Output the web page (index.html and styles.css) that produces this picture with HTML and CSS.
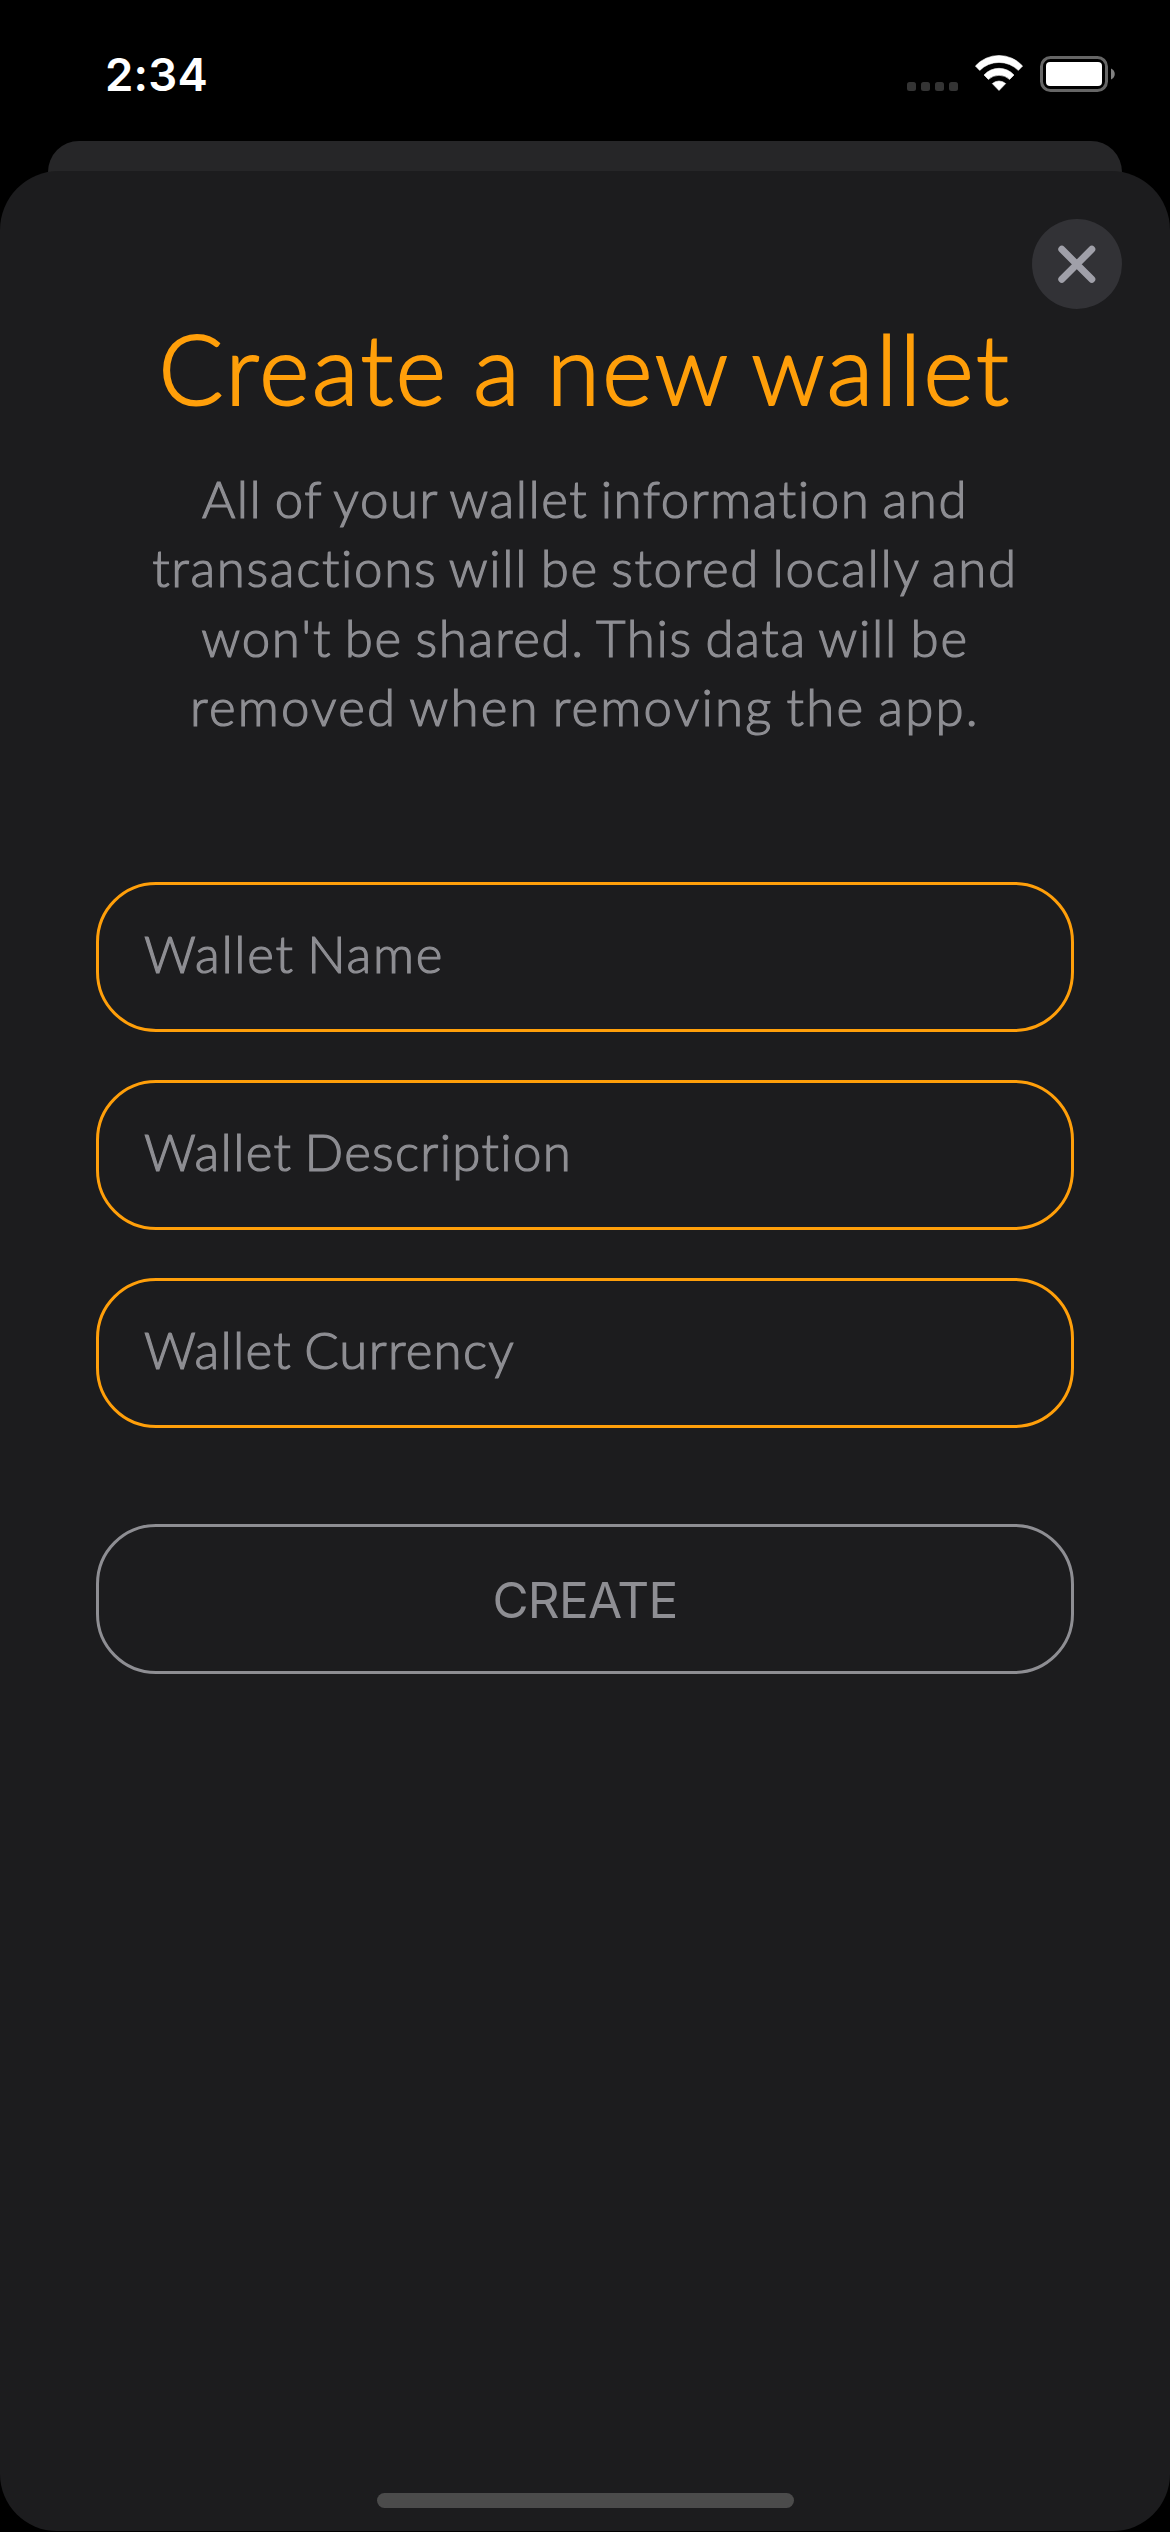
FILE: index.html
```html
<!DOCTYPE html>
<html lang="en">
<head>
<meta charset="utf-8">
<title>Create a new wallet</title>
<link rel="stylesheet" href="styles.css">
</head>
<body>
<div class="screen">
  <header class="status">
    <span class="time">2:34</span>
    <div class="indicators">
      <svg class="cellular" width="51" height="37" viewBox="0 0 51 37" fill="#343434">
        <rect x="0" y="27" width="9" height="9" rx="2.5"/>
        <rect x="14" y="27" width="9" height="9" rx="2.5"/>
        <rect x="28" y="27" width="9" height="9" rx="2.5"/>
        <rect x="42" y="27" width="9" height="9" rx="2.5"/>
      </svg>
      <svg class="wifi" width="48" height="37" viewBox="0 0 48 37" fill="#fff" stroke="#fff" stroke-width="0.6" stroke-linejoin="round">
        <path d="M.4 11A31.7 31.7 0 0 1 47.6 11L43.3 15.4A27.3 27.3 0 0 0 4.7 15.4Z"/>
        <path d="M9 20A20.2 20.2 0 0 1 39 20L34.6 24.4A15.7 15.7 0 0 0 13.4 24.4Z"/>
        <path d="M17.3 28.6A10 10 0 0 1 30.7 28.6L24 35.5Z"/>
      </svg>
      <svg class="battery" width="76" height="37" viewBox="0 0 76 37">
        <rect x="1.5" y="2.5" width="65" height="33" rx="9" fill="none" stroke="#666" stroke-width="3"/>
        <rect x="6" y="7" width="56" height="24" rx="4" fill="#fff"/>
        <path d="M71 13.5C76 15.5 76 22.5 71 24.5Z" fill="#808080"/>
      </svg>
    </div>
  </header>
  <div class="back-sheet"></div>
  <main class="sheet">
    <button class="close" aria-label="Close">
      <svg width="90" height="90" viewBox="0 0 90 90" fill="none" stroke="#a0a0a9" stroke-width="7" stroke-linecap="round">
        <path d="M29.8 30.3L59.8 60.3M59.8 30.3L29.8 60.3"/>
      </svg>
    </button>
    <h1 class="title">Create a new wallet</h1>
    <p class="intro">
      <span class="line line-1">All of your wallet information and</span>
      <span class="line line-2">transactions will be stored locally and</span>
      <span class="line line-3">won't be shared. This data will be</span>
      <span class="line line-4">removed when removing the app.</span>
    </p>
    <form class="fields">
      <div class="field name">Wallet Name</div>
      <div class="field description">Wallet Description</div>
      <div class="field currency">Wallet Currency</div>
      <button class="create" type="button">CREATE</button>
    </form>
    <div class="home-bar"></div>
  </main>
</div>
</body>
</html>
```
FILE: styles.css
```css
* { box-sizing: border-box; }

body {
  margin: 0;
  background: #000;
}

.screen {
  width: 1170px;
  height: 2532px;
  overflow: hidden;
  display: flex;
  flex-direction: column;
  padding-bottom: 1px;
}

.status {
  flex: none;
  height: 141px;
  padding: 55px 54px 0 105px;
  display: flex;
  justify-content: space-between;
  align-items: flex-start;
}

.time {
  margin-top: 1px;
  font: 600 45.5px/37px Inter, sans-serif;
  letter-spacing: 0.2px;
  color: #fff;
}

.indicators { display: flex; }
.wifi { margin-left: 17px; }
.battery { margin-left: 17px; }

.back-sheet {
  flex: none;
  height: 34px;
  margin: 0 48px;
  border-radius: 31px 31px 0 0;
  background: #262628;
}

.sheet {
  flex: 1;
  margin-top: -4px;
  padding: 48px 96px 23px;
  border-radius: 59px 59px 57px 57px;
  background: #1c1c1e;
  display: flex;
  flex-direction: column;
  font-family: Lato, sans-serif;
  font-weight: 300;
  color: #8e8e93;
}

.close {
  flex: none;
  align-self: flex-end;
  width: 90px;
  height: 90px;
  margin-right: -48px;
  padding: 0;
  border: 0;
  border-radius: 50%;
  background: #323236;
}

.close svg { display: block; }

.title {
  margin: -1px 0 36px;
  font-size: 96px;
  line-height: 120px;
  font-weight: 300;
  letter-spacing: 2.6px;
  word-spacing: -4px;
  text-align: center;
  white-space: nowrap;
  color: #ff9f0a;
  -webkit-text-stroke: 2px #ff9f0a;
}

.intro {
  margin: 0;
  text-align: center;
  white-space: nowrap;
  font-size: 51px;
  line-height: 69.33px;
  word-spacing: -3px;
  -webkit-text-stroke: 1.2px #8e8e93;
}

.line { display: block; }
.line-1 { letter-spacing: 1.53px; }
.line-2 { letter-spacing: 1.66px; }
.line-3 { letter-spacing: 1.7px; }
.line-4 { letter-spacing: 2.2px; }

.fields {
  margin-top: 141px;
  display: flex;
  flex-direction: column;
  gap: 48px;
}

.field,
.create {
  height: 150px;
  border: 3px solid #ff9f0a;
  border-radius: 60px;
}

.field {
  padding: 0 45px 7px;
  display: flex;
  align-items: center;
  font-size: 51px;
  line-height: 60px;
  word-spacing: -3px;
  -webkit-text-stroke: 1.2px #8e8e93;
}

.name { letter-spacing: 1.7px; }
.description { letter-spacing: 1.3px; }
.currency { letter-spacing: 1.25px; }

.create {
  margin-top: 48px;
  padding: 2px 0 0;
  border-color: #8e8e93;
  background: transparent;
  color: #8e8e93;
  font: 400 49.5px/60px Inter, sans-serif;
  letter-spacing: -0.7px;
}

.home-bar {
  width: 417px;
  height: 15px;
  margin: auto auto 0;
  border-radius: 8px;
  background: #4b4b4b;
}
```
